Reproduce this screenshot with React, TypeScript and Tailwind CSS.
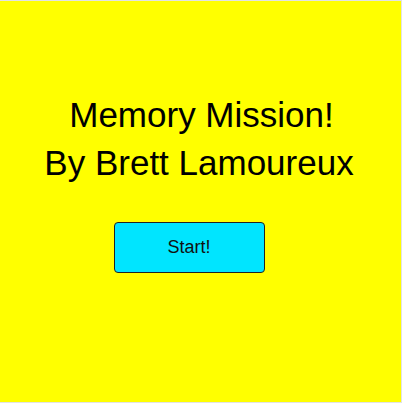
export default function App() {
  return (
    <div className="w-[402px] h-[403px] bg-[#e3e3e3] pt-px">
      <div
        className="w-[401px] h-[401px] bg-[#ffff00] flex flex-col items-center pt-[90px]"
        style={{ fontFamily: '"Liberation Sans", Arial, sans-serif' }}
      >
        <h1 className="flex flex-col items-center text-[35px] leading-[48px] text-black font-normal">
          <span className="pl-[2px]">Memory Mission!</span>
          <span className="pr-[3px]">By Brett Lamoureux</span>
        </h1>
        <button className="mt-[35px] w-[151px] h-[51px] bg-[#00e5ff] border border-[#222] rounded-[4px] text-[18px] text-[#111] ml-[-23px]">
          Start!
        </button>
      </div>
    </div>
  );
}
